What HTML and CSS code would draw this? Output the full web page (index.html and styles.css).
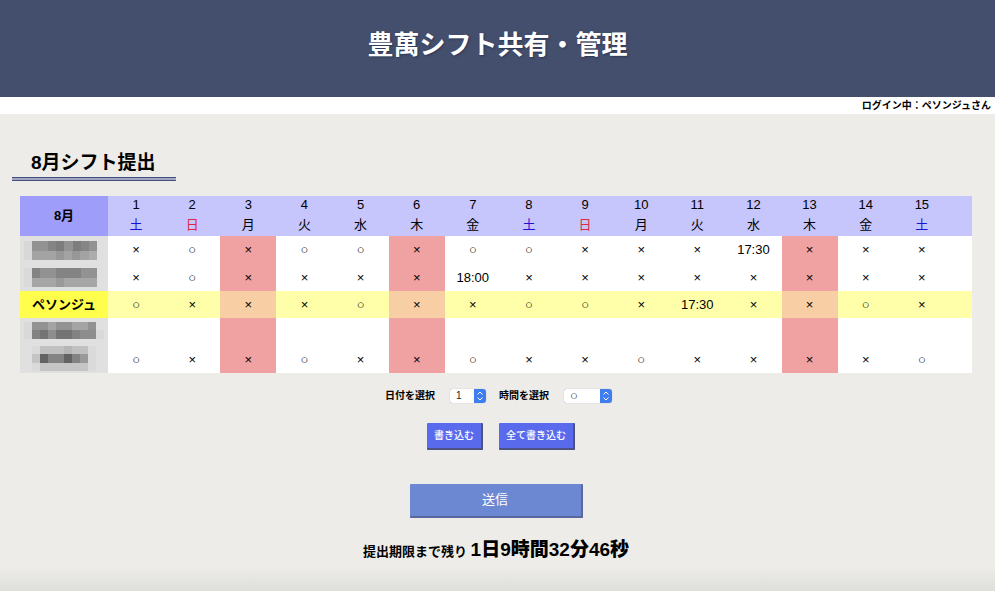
FILE: index.html
```html
<!DOCTYPE html>
<html lang="ja">
<head>
<meta charset="utf-8">
<title>豊萬シフト共有・管理</title>
<link rel="stylesheet" href="styles.css">
</head>
<body>
<header class="site-header"><h1>豊萬シフト共有・管理</h1></header>
<p class="login">ログイン中：ペソンジュさん</p>
<main>
  <h2 class="section-title">8月シフト提出</h2>
  <table class="shift">
    <colgroup><col class="col-name"><col span="15"><col class="col-end"></colgroup>
    <thead>
      <tr><th rowspan="2" class="month">8月</th><td>1</td><td>2</td><td>3</td><td>4</td><td>5</td><td>6</td><td>7</td><td>8</td><td>9</td><td>10</td><td>11</td><td>12</td><td>13</td><td>14</td><td>15</td><td></td></tr>
      <tr><td class="sat">土</td><td class="sun">日</td><td>月</td><td>火</td><td>水</td><td>木</td><td>金</td><td class="sat">土</td><td class="sun">日</td><td>月</td><td>火</td><td>水</td><td>木</td><td>金</td><td class="sat">土</td><td></td></tr>
    </thead>
    <tbody>
      <tr><th><svg class="mosaic" width="88" height="27" viewBox="0 0 88 27" shape-rendering="crispEdges" aria-hidden="true"><path fill="#d8d8d8" d="M4 4h8v19H4z"/><path fill="#929292" d="M12 4h65v10H12z"/><path fill="#858585" d="M28 4h8v10h-8zM61 4h8v10h-8z"/><path fill="#7d7d7d" d="M36 4h8v10h-8zM53 4h8v10h-8z"/><path fill="#a3a3a3" d="M12 14h65v9H12z"/><path fill="#979797" d="M36 14h8v9h-8zM52 14h8v9h-8z"/><path fill="#adadad" d="M69 14h8v9h-8z"/></svg></th><td>×</td><td>○</td><td class="off">×</td><td>○</td><td>○</td><td class="off">×</td><td>○</td><td>○</td><td>×</td><td>×</td><td>×</td><td>17:30</td><td class="off">×</td><td>×</td><td>×</td><td></td></tr>
      <tr><th><svg class="mosaic" width="88" height="27" viewBox="0 0 88 27" shape-rendering="crispEdges" aria-hidden="true"><path fill="#dadada" d="M4 4h8v19H4z"/><path fill="#929292" d="M12 4h65v10H12z"/><path fill="#838383" d="M12 4h8v10h-8zM36 4h25v10H36z"/><path fill="#a6a6a6" d="M12 14h65v9H12z"/><path fill="#999" d="M36 14h8v9h-8z"/></svg></th><td>×</td><td>○</td><td class="off">×</td><td>×</td><td>×</td><td class="off">×</td><td>18:00</td><td>×</td><td>×</td><td>×</td><td>×</td><td>×</td><td class="off">×</td><td>×</td><td>×</td><td></td></tr>
      <tr class="me"><th>ペソンジュ</th><td>○</td><td>×</td><td class="off">×</td><td>×</td><td>○</td><td class="off">×</td><td>×</td><td>○</td><td>○</td><td>×</td><td>17:30</td><td>×</td><td class="off">×</td><td>○</td><td>×</td><td></td></tr>
      <tr><th><svg class="mosaic" width="88" height="27" viewBox="0 0 88 27" shape-rendering="crispEdges" aria-hidden="true"><path fill="#d9d9d9" d="M4 3h8v17H4zM76 11h8v9h-8z"/><path fill="#929292" d="M12 3h64v8H12z"/><path fill="#a4a4a4" d="M28 3h8v8h-8zM52 3h16v8H52z"/><path fill="#828282" d="M12 11h64v9H12z"/><path fill="#747474" d="M20 11h8v9h-8zM36 11h16v9H36z"/><path fill="#8d8d8d" d="M28 11h8v9h-8zM60 11h16v9H60z"/></svg></th><td></td><td></td><td class="off"></td><td></td><td></td><td class="off"></td><td></td><td></td><td></td><td></td><td></td><td></td><td class="off"></td><td></td><td></td><td></td></tr>
      <tr><th><svg class="mosaic" width="88" height="27" viewBox="0 0 88 27" shape-rendering="crispEdges" aria-hidden="true"><path fill="#dadada" d="M12 0h8v25h-8zM68 0h8v25h-8z"/><path fill="#c0c0c0" d="M20 0h48v8H20z"/><path fill="#b5b5b5" d="M44 0h8v8h-8z"/><path fill="#c5c5c5" d="M12 8h8v9h-8zM20 17h48v8H20z"/><path fill="#828282" d="M20 8h40v9H20z"/><path fill="#636363" d="M20 8h8v9h-8zM44 8h8v9h-8z"/><path fill="#999" d="M60 8h8v9h-8z"/></svg></th><td>○</td><td>×</td><td class="off">×</td><td>○</td><td>×</td><td class="off">×</td><td>○</td><td>×</td><td>×</td><td>○</td><td>×</td><td>×</td><td class="off">×</td><td>×</td><td>○</td><td></td></tr>
    </tbody>
  </table>
  <form class="entry">
    <div class="pickers">
      <label for="day">日付を選択</label>
      <span class="picker picker-day"><select id="day"><option>1</option></select><svg width="12" height="14" viewBox="0 0 12 14" aria-hidden="true"><path fill="#3f7df0" d="M0 0h9a3 3 0 0 1 3 3v8a3 3 0 0 1-3 3H0z"/><path fill="none" stroke="#fff" d="M3.500 5.500 6 3l2.500 2.500M3.500 8.500 6 11l2.500-2.500"/></svg></span>
      <label for="time">時間を選択</label>
      <span class="picker picker-time"><select id="time"><option>○</option></select><svg width="12" height="14" viewBox="0 0 12 14" aria-hidden="true"><path fill="#3f7df0" d="M0 0h9a3 3 0 0 1 3 3v8a3 3 0 0 1-3 3H0z"/><path fill="none" stroke="#fff" d="M3.500 5.500 6 3l2.500 2.500M3.500 8.500 6 11l2.500-2.500"/></svg></span>
    </div>
    <div class="writes"><button type="button">書き込む</button><button type="button">全て書き込む</button></div>
    <button class="send" type="submit">送信</button>
  </form>
  <p class="deadline">提出期限まで残り <strong>1日9時間32分46秒</strong></p>
</main>
</body>
</html>
```
FILE: styles.css
```css
* { box-sizing: border-box; }
html { min-height: 100%; }
body {
  margin: 0;
  min-height: 100vh;
  background: linear-gradient(to top, #dededb, #edece9 24px);
  color: #000;
  font-family: "Liberation Sans", "Noto Sans CJK JP", sans-serif;
  font-size: 13px;
}
.site-header {
  height: 97px;
  padding-top: 26px;
  background: #444f6d;
  text-align: center;
}
h1 {
  margin: 0;
  color: #fff;
  font-size: 26px;
  line-height: 38px;
  text-shadow: 1px 1px 2px #2c3654;
}
.login {
  margin: 0;
  padding-right: 4px;
  background: #fff;
  font-size: 10px;
  font-weight: bold;
  line-height: 17px;
  text-align: right;
}
main { padding: 34px 23px 0 20px; }
.section-title {
  width: fit-content;
  margin: 0 0 15px -8px;
  padding: 0 20px 0 19px;
  border-bottom: 4px double #444f80;
  background: #a3a6c0;
  background: linear-gradient(#a3a6c0, #a3a6c0) bottom / 100% 4px no-repeat border-box;
  font-size: 19px;
  line-height: 29px;
}
.shift {
  width: 100%;
  table-layout: fixed;
  border-collapse: collapse;
  background: #fff;
  text-align: center;
}
.col-name { width: 88px; }
.col-end { width: 22px; }
.shift th, .shift td { padding: 0; line-height: 18px; }
thead { background: #c6c5fc; }
thead tr { height: 20px; }
.shift thead td { padding-bottom: 2px; }
.shift .month { background: #9e9df9; }
.sat { color: #1b10d8; }
.sun { color: #dc2941; }
tbody tr { height: 27px; }
tbody tr:nth-child(3n + 1) { height: 28px; }
tbody th { background: #e0e0e0; }
.off { background: #f0a1a1; }
.me { background: #fffea9; }
.me th { background: #fffe4c; }
.me .off { background: #f8cfa4; }
.mosaic { display: block; }
.entry { display: flex; flex-direction: column; align-items: center; }
.pickers {
  display: flex;
  align-items: center;
  margin-top: 15px;
  padding-left: 5px;
  font-size: 10px;
  font-weight: bold;
  line-height: 16px;
}
.picker { position: relative; display: flex; margin: 0 13px 0 15px; }
.picker:last-child { margin-right: 0; }
.picker select {
  appearance: none;
  width: 100%;
  height: 14px;
  margin: 0;
  padding: 0 0 0 6px;
  border: 0;
  border-radius: 3px;
  background: #fff;
  box-shadow: 0 0 1px #999;
  color: #222;
  font: 10px/14px "Liberation Sans", "Noto Sans CJK JP", sans-serif;
}
.picker-day { width: 36px; }
.picker-time { width: 48px; }
.picker-time select { font-size: 13px; }
.picker svg { position: absolute; top: 0; right: 0; pointer-events: none; }
button {
  border: 0 solid #4d5285;
  border-width: 0 2px 2px 0;
  border-radius: 1px;
  color: #fff;
  font-family: "Liberation Sans", "Noto Sans CJK JP", sans-serif;
}
.writes { display: flex; gap: 16px; margin: 19px 0 34px; padding-left: 10px; }
.writes button {
  height: 27px;
  padding: 0 7px;
  background: #596bec;
  font-size: 10px;
  font-weight: 500;
  line-height: 14px;
}
.send {
  width: 173px;
  height: 34px;
  padding: 0 0 4px;
  background: #6d88d2;
  border-color: #5a679f;
  font-size: 13px;
}
.deadline {
  margin: 17px 0 0;
  font-weight: bold;
  line-height: 30px;
  text-align: center;
}
.deadline strong { font-size: 19px; }
```
